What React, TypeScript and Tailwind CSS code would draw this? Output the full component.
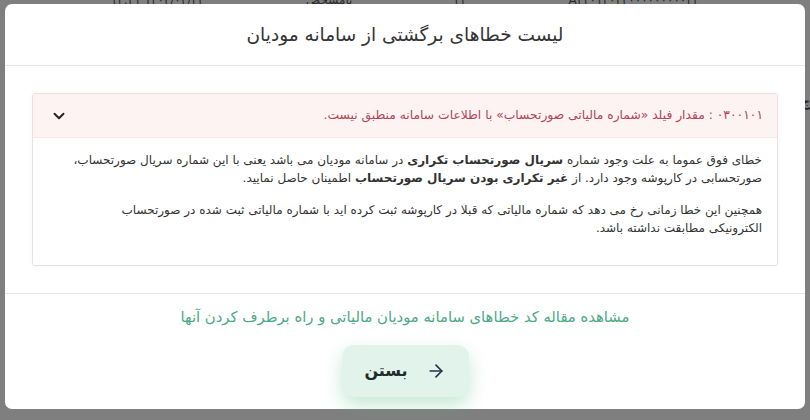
import React from "react";
import { ChevronDown, ArrowRight } from "lucide-react";

const fa = { fontFamily: '"DejaVu Sans", "Noto Sans", sans-serif' };

export default function App() {
  return (
    <div
      dir="rtl"
      className="relative w-[810px] h-[420px] overflow-hidden bg-[#7f7f7f]"
      style={fa}
    >
      {/* dimmed table row behind the overlay */}
      <div className="absolute left-0 right-0 top-[-9px] flex flex-row-reverse justify-around text-[12px] text-[#2a2a2a] px-[60px]">
        <span>۱۴۰۲/۰۲/۲۲ ۱۲:۲۱</span>
        <span>نامشخص</span>
        <span>۲۲</span>
        <span>A۲۲۰۱۲۰۲۴۰۰۰۰۰۰۰۰۰۲۲</span>
      </div>
      <div className="absolute right-0 top-[92px] text-[13px] font-bold text-[#222]">ج</div>

      <div className="absolute left-[5px] top-[4px] w-[800px] h-[405px] bg-white rounded-[7px] flex flex-col">
        <div className="h-[62px] shrink-0 flex items-center justify-center border-b border-[#e6e6e6]">
          <h1 className="text-[18.5px] text-[#333]">
            لیست خطاهای برگشتی از سامانه مودیان
          </h1>
        </div>

        <div className="px-[27px] pt-[27px] pb-[27px] border-b border-[#e4e4e4]">
          <div className="border border-[#e8e1e1] rounded-[3px] shadow-[0_0_6px_rgba(0,0,0,0.04)]">
            <div className="h-[44px] bg-[#fdf3f3] flex items-center justify-between pr-[14px] pl-[17px] border-b border-[#f6e6e6]">
              <span className="text-[12.3px] text-[#b04658]">
                ۰۳۰۰۱۰۱ : مقدار فیلد «شماره مالیاتی صورتحساب» با اطلاعات سامانه منطبق نیست.
              </span>
              <ChevronDown size={18} strokeWidth={2.6} className="text-[#222]" />
            </div>
            <div className="pr-[15px] pl-[10px] pt-[13px] pb-[28px] text-[12px] leading-[18px] text-[#333] whitespace-nowrap">
              <p className="mb-[14px]">
                خطای فوق عموما به علت وجود شماره <b>سریال صورتحساب تکراری</b> در سامانه مودیان می باشد یعنی با این شماره سریال صورتحساب،
                <br />
                صورتحسابی در کارپوشه وجود دارد. از <b>غیر تکراری بودن سریال صورتحساب</b> اطمینان حاصل نمایید.
              </p>
              <p>
                همچنین این خطا زمانی رخ می دهد که شماره مالیاتی که قبلا در کارپوشه ثبت کرده اید با شماره مالیاتی ثبت شده در صورتحساب
                <br />
                الکترونیکی مطابقت نداشته باشد.
              </p>
            </div>
          </div>
        </div>

        <div className="flex flex-col items-center pt-[12px]">
          <a className="text-[14.8px] text-[#4ba984]">
            مشاهده مقاله کد خطاهای سامانه مودیان مالیاتی و راه برطرف کردن آنها
          </a>
          <button className="mt-[17px] w-[127px] h-[52px] rounded-[12px] bg-[#e1f3ea] flex items-center justify-center gap-[18px] shadow-[0_8px_18px_rgba(90,190,140,0.35)]">
            <ArrowRight size={20} strokeWidth={2} className="text-[#26324d]" />
            <span className="text-[16px] font-bold text-[#1f2a2a]">بستن</span>
          </button>
        </div>
      </div>
    </div>
  );
}
